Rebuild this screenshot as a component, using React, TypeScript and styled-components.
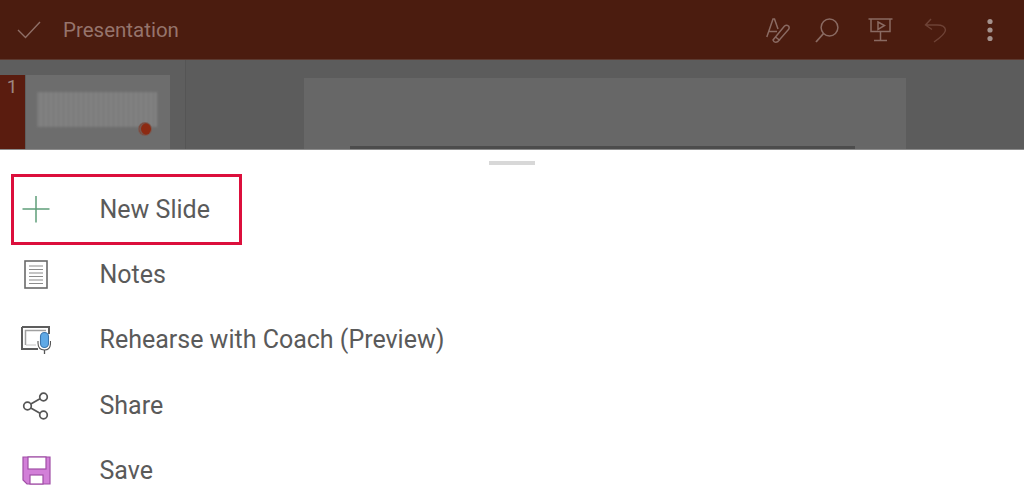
import React from "react";
import styled, { createGlobalStyle } from "styled-components";

const Global = createGlobalStyle`
  html, body { margin: 0; padding: 0; background: #fff; }
  body { font-family: Roboto, "Liberation Sans", sans-serif; overflow: hidden; }
`;
const Page = styled.div`
  width: 1024px; height: 498px; overflow: hidden; display: flex; flex-direction: column;
`;
const Backdrop = styled.div`
  flex: none; display: flex; flex-direction: column; overflow: hidden;
  border-bottom: 1px solid #8c8c8c; box-sizing: border-box; height: 150px;
`;
const Header = styled.header`
  height: 60px; flex: none; background: #4b1c0f; display: flex; align-items: center;
  box-shadow: inset 0 -1px 0 #5c3a30;
`;
const Check = styled.div`
  width: 63px; flex: none; display: flex; justify-content: center; padding-right: 5px; box-sizing: border-box;
`;
const Title = styled.div`
  flex: 1; color: #96746c; font-size: 20.5px; margin-top: 0;
`;
const Tools = styled.div`
  display: flex; align-items: center; padding-right: 5px;
`;
const Tool = styled.div<{ $w: number }>`
  width: ${p => p.$w}px; height: 40px; display: flex; align-items: center; justify-content: center;
`;
const Workspace = styled.div`
  flex: 1; display: flex; min-height: 0; background: #5c5c5c;
`;
const Rail = styled.div`
  width: 186px; flex: none; display: flex; padding-top: 15px; box-sizing: border-box;
  border-right: 1px solid #555;
  background: #5e5e5e;
`;
const Badge = styled.div`
  width: 25px; flex: none; background: #5a1c0f; color: #9d8781; font-size: 19px;
  text-align: center; line-height: 24px; padding-right: 1px; box-sizing: border-box;
`;
const Thumb = styled.div`
  width: 144px; margin-left: 1px; background: #6d6d6d; position: relative; padding: 17px 12px 0 11px; box-sizing: border-box;
`;
const ThumbText = styled.div`
  height: 35px; width: 120px; filter: blur(0.8px);
  background: repeating-linear-gradient(90deg, #7c7c7c 0 3px, #838383 3px 5px), #808080;
`;
const Dot = styled.div`
  position: absolute; left: 113px; top: 48px; width: 12px; height: 12px; border-radius: 50%;
  background: #8c2a12; box-shadow: 0 0 0 1px #7a5a52, inset 2px 0 0 #75574f;
`;
const Stage = styled.div`
  flex: 1; display: flex; justify-content: center; padding-top: 18px;
`;
const Slide = styled.div`
  width: 602px; margin-left: -1px; background: #676767; display: flex; flex-direction: column; align-items: center; justify-content: flex-end;
`;
const SlideLine = styled.div`
  width: 505px; height: 3px; margin-right: 4px; background: #4c4c4c; filter: blur(0.6px);
`;
const Sheet = styled.div`
  flex: 1; background: #fff; display: flex; flex-direction: column; min-height: 0;
`;
const Handle = styled.div`
  width: 46px; height: 4px; flex: none; background: #d8d8d8; margin: 11px auto 0;
`;
const Menu = styled.div`
  display: flex; flex-direction: column; padding-top: 12px;
`;
const Row = styled.div`
  height: 65.3px; flex: none; display: flex; align-items: center; position: relative;
`;
const IconSlot = styled.div`
  width: 72px; flex: none; display: flex; justify-content: center;
`;
const Label = styled.div`
  margin-left: 27.5px; color: #5a5a5a; font-size: 25px; line-height: 30px; white-space: nowrap;
`;
const Highlight = styled.div`
  position: absolute; left: 11px; top: -3px; width: 231px; height: 71px; box-sizing: border-box;
  border: 3px solid #dc0f3c;
`;

const stroke = "#8a6a62";

export default function App() {
  return (
    <Page>
      <Global />
      <Backdrop>
        <Header>
          <Check>
            <svg width="24" height="18" viewBox="0 0 24 18" fill="none">
              <path d="M1 9 L8.5 16.5 L23 1" stroke="#8f6f67" strokeWidth="1.4" />
            </svg>
          </Check>
          <Title>Presentation</Title>
          <Tools>
            <Tool $w={46}>
              <svg width="24" height="25" viewBox="0 0 24 25" fill="none" stroke={stroke} strokeWidth="1.5">
                <path d="M0.8 19 L7 1 H8.5 L12 11 M3 13.5 H11" />
                <path d="M7 22 L18.5 8 Q20.5 6.5 22.5 8 Q24 10 22 12 L12 23.5 Q8.5 25.5 7 22 Z M9.5 19 L14 22.5" />
              </svg>
            </Tool>
            <Tool $w={51}>
              <svg width="24" height="25" viewBox="0 0 24 25" fill="none" stroke={stroke} strokeWidth="1.5">
                <circle cx="14.5" cy="9.5" r="8.4" />
                <path d="M8.5 15.5 L1 24" strokeWidth="1.8" />
              </svg>
            </Tool>
            <Tool $w={57}>
              <svg width="25" height="24" viewBox="0 0 25 24" fill="none" stroke={stroke} strokeWidth="1.5">
                <path d="M0.5 1 H24.5 M3 1 V13.5 H22 V1 M12.5 13.5 V22 M6 22.5 H19" />
                <path d="M10 4 L16.5 7.5 L10 11.5 Z" />
              </svg>
            </Tool>
            <Tool $w={52}>
              <svg width="23" height="25" viewBox="0 0 23 25" fill="none" stroke="#6e4236" strokeWidth="1.4">
                <path d="M7 1 L1.5 7 L8 11.5 M1.5 7 H13 Q21 7 21.5 12 Q21.5 16 10 24" />
              </svg>
            </Tool>
            <Tool $w={58}>
              <svg width="6" height="24" viewBox="0 0 6 24" fill="#a4928d">
                <circle cx="3" cy="3.5" r="2.6" />
                <circle cx="3" cy="12" r="2.6" />
                <circle cx="3" cy="20.5" r="2.6" />
              </svg>
            </Tool>
          </Tools>
        </Header>
        <Workspace>
          <Rail>
            <Badge>1</Badge>
            <Thumb>
              <ThumbText />
              <Dot />
            </Thumb>
          </Rail>
          <Stage>
            <Slide>
              <SlideLine />
            </Slide>
          </Stage>
        </Workspace>
      </Backdrop>
      <Sheet>
        <Handle />
        <Menu>
          <Row>
            <IconSlot>
              <svg width="28" height="28" viewBox="0 0 28 28" fill="none" stroke="#5f9f7a" strokeWidth="1.5">
                <path d="M14 0 V26.5 M0.5 13 H27.5" />
              </svg>
            </IconSlot>
            <Label>New Slide</Label>
            <Highlight />
          </Row>
          <Row>
            <IconSlot>
              <svg width="24" height="29" viewBox="0 0 24 29" fill="none">
                <rect x="1" y="1" width="22" height="27" stroke="#6a6a6a" strokeWidth="1.6" />
                <path d="M5 6 H19 M5 9.5 H19 M5 13 H19 M5 16.5 H19 M5 20 H19 M5 23.5 H19" stroke="#8c8c8c" strokeWidth="1.2" />
              </svg>
            </IconSlot>
            <Label>Notes</Label>
          </Row>
          <Row>
            <IconSlot>
              <svg width="30" height="28" viewBox="0 0 30 28" fill="none">
                <path d="M1 1 H28 V8 M1 1 V23 H17" stroke="#5d5d5d" strokeWidth="2" />
                <path d="M4.5 19 V4.5 H25" stroke="#a0a0a0" strokeWidth="1.5" />
                <path d="M5 19 H15" stroke="#c4c4c4" strokeWidth="1" />
                <path d="M17 15 V17 Q17 24 23.5 24 Q29.5 24 29.5 17 V15" stroke="#555" strokeWidth="1.1" fill="#fff" />
                <rect x="19.5" y="6.5" width="8" height="15" rx="4" fill="#5fa9e6" stroke="#3c76ad" strokeWidth="1.1" />
                <path d="M23.5 24 V28" stroke="#555" strokeWidth="1.3" />
              </svg>
            </IconSlot>
            <Label>Rehearse with Coach (Preview)</Label>
          </Row>
          <Row>
            <IconSlot>
              <svg width="28" height="28" viewBox="0 0 28 28" fill="none" stroke="#555" strokeWidth="1.7">
                <circle cx="5.5" cy="14" r="3.8" />
                <circle cx="21.5" cy="5" r="3.8" />
                <circle cx="21.5" cy="23" r="3.8" />
                <path d="M8.8 12 L18 6.8 M8.8 16 L18 21.2" />
              </svg>
            </IconSlot>
            <Label>Share</Label>
          </Row>
          <Row>
            <IconSlot>
              <svg width="29" height="29" viewBox="0 0 29 29" fill="none">
                <path d="M1 1 H28 V28 H5 L1 24 Z" fill="#d27fd8" stroke="#a04fa6" strokeWidth="1.2" />
                <rect x="6" y="1" width="18" height="12" fill="#fff" stroke="#a04fa6" strokeWidth="1.2" />
                <rect x="8" y="19" width="13" height="9" fill="#fff" stroke="#a04fa6" strokeWidth="1.2" />
              </svg>
            </IconSlot>
            <Label>Save</Label>
          </Row>
        </Menu>
      </Sheet>
    </Page>
  );
}
